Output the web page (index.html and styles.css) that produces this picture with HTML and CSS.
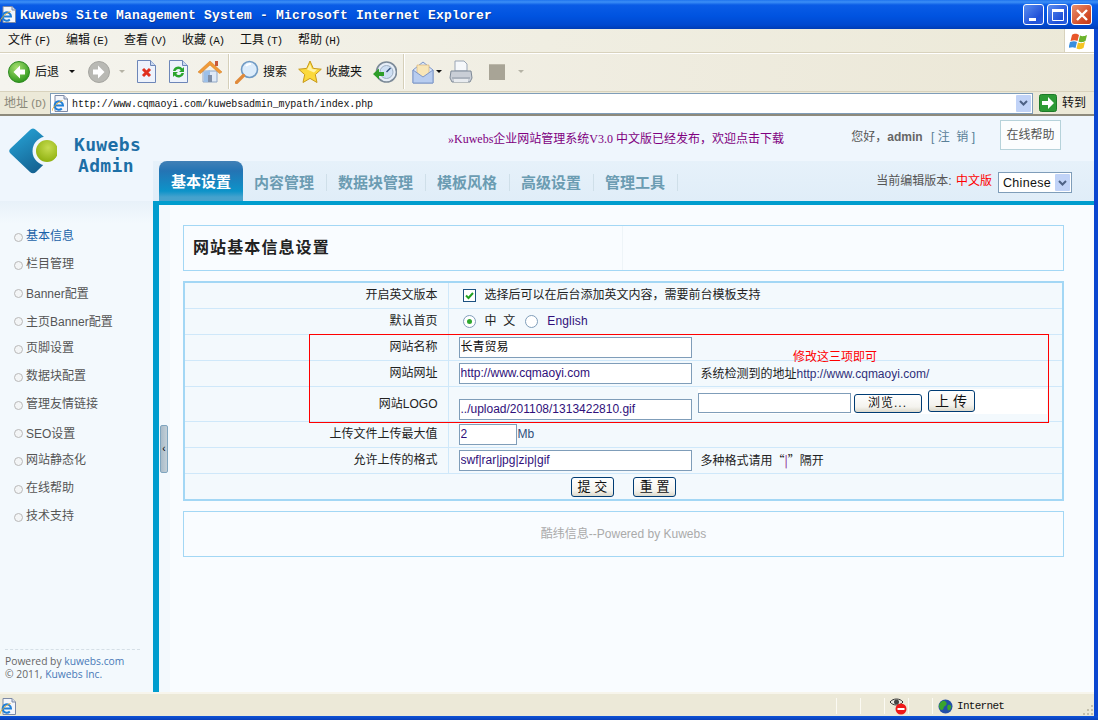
FILE: index.html
```html
<!DOCTYPE html>
<html lang="zh-CN">
<head>
<meta charset="UTF-8">
<title>Kuwebs Site Management System - Microsoft Internet Explorer</title>
<link rel="stylesheet" href="styles.css">
</head>
<body>

<svg width="0" height="0" class="defs">
  <symbol id="ie-doc" viewBox="0 0 17 17">
    <path d="M3 .5h9l3.500 3.500v12.500H3z" fill="#f4f6fb" stroke="#7d8aa6"/>
    <path d="M12 .5V4h3.500" fill="#d5dcec" stroke="#7d8aa6"/>
    <path d="M3.500 10.500h7.500a4.200 4.200 0 1 0-1.200 3" fill="none" stroke="#1f7fd8" stroke-width="2"/>
    <path d="M.5 15.500c-1-2 5-8.500 10-10" fill="none" stroke="#e8a820" stroke-width=".9"/>
  </symbol>
</svg>

<div class="window">

  <div class="titlebar">
    <svg class="title-icon" width="17" height="17"><use href="#ie-doc"/></svg>
    <span class="title-text">Kuwebs Site Management System - Microsoft Internet Explorer</span>
    <div class="title-btns">
      <span class="tbtn"><svg width="20" height="20"><rect x="5" y="13" width="7" height="3" fill="#fff"/></svg></span>
      <span class="tbtn"><svg width="20" height="20"><path d="M4.500 5.500h11v10h-11z" fill="none" stroke="#fff"/><rect x="4" y="4" width="12" height="3" fill="#fff"/></svg></span>
      <span class="tbtn tbtn-close"><svg width="20" height="20"><path d="M5 5l10 10M15 5L5 15" stroke="#fff" stroke-width="2.400"/></svg></span>
    </div>
  </div>

  <div class="menubar">
    <span class="menu-item">文件<i>(F)</i></span>
    <span class="menu-item">编辑<i>(E)</i></span>
    <span class="menu-item">查看<i>(V)</i></span>
    <span class="menu-item">收藏<i>(A)</i></span>
    <span class="menu-item">工具<i>(T)</i></span>
    <span class="menu-item">帮助<i>(H)</i></span>
    <span class="winlogo">
      <svg width="22" height="20" viewBox="0 0 22 20">
        <path d="M3 4c3-2 5-1 7 0l-1.500 6c-2-1-4-1-7 0z" fill="#e8562a"/>
        <path d="M11 4.500c2 1 4 1 7-.5l-1.500 6c-3 1.500-5 1.500-7 .5z" fill="#6cb32c"/>
        <path d="M1 11c3-1 5-1 7 0l-1.500 6c-2-1-4-1-7 0z" fill="#3a8ede"/>
        <path d="M9 11.500c2 1 4 1 7-.5l-1.500 6c-3 1.500-5 1.500-7 .5z" fill="#f5c422"/>
      </svg>
    </span>
  </div>

  <div class="toolbar">
    <svg class="t-back" width="22" height="22" viewBox="0 0 22 22">
      <defs><radialGradient id="gb" cx=".4" cy=".3" r=".8"><stop offset="0" stop-color="#a8e070"/><stop offset="1" stop-color="#1e8e12"/></radialGradient></defs>
      <circle cx="11" cy="11" r="10.500" fill="url(#gb)" stroke="#2f8a22"/>
      <path d="M12 4.500L5.500 11l6.500 6.500V13.500h5v-5h-5z" fill="#fff"/>
    </svg>
    <span class="t-label t-back-label">后退</span>
    <span class="arrow t-back-arrow"></span>
    <svg class="t-fwd" width="22" height="22" viewBox="0 0 22 22">
      <circle cx="11" cy="11" r="10.500" fill="#b9b9b4" stroke="#a5a5a0"/>
      <path d="M10 4.500l6.500 6.500-6.500 6.500V13.500H5v-5h5z" fill="#fff"/>
    </svg>
    <span class="arrow arrow-off t-fwd-arrow"></span>
    <svg class="t-stop" width="19" height="23" viewBox="0 0 19 23">
      <path d="M.5 .5h13l5 5v17H.5z" fill="#eef3fc" stroke="#6d86b8"/>
      <path d="M13.500 .5v5h5" fill="#c9d8f0" stroke="#6d86b8"/>
      <path d="M6 9l7 7M13 9l-7 7" stroke="#e0301e" stroke-width="3"/>
    </svg>
    <svg class="t-refresh" width="19" height="23" viewBox="0 0 19 23">
      <path d="M.5 .5h13l5 5v17H.5z" fill="#eef3fc" stroke="#6d86b8"/>
      <path d="M13.500 .5v5h5" fill="#c9d8f0" stroke="#6d86b8"/>
      <path d="M4 11a5.500 5.500 0 0 1 9.500-2.500L15 7v5h-5l1.800-1.800A3 3 0 0 0 6.500 11z" fill="#2aa52e"/>
      <path d="M15 13a5.500 5.500 0 0 1-9.500 2.500L4 17v-5h5l-1.800 1.800A3 3 0 0 0 12.500 13z" fill="#2aa52e"/>
    </svg>
    <svg class="t-home" width="24" height="24" viewBox="0 0 24 24">
      <path d="M5 11h14v11H5z" fill="#dfe9f6" stroke="#8fa6c6"/>
      <path d="M6 12v10h6V10z" fill="#9cc0e8"/>
      <path d="M10 15h4v7h-4z" fill="#7f8fa8"/>
      <path d="M0 12L12 1l12 11-2.500 1.500L12 5 2.500 13.500z" fill="#f09a38" stroke="#d07a20" stroke-width=".5"/>
      <rect x="17" y="1" width="3" height="5" fill="#c8583a"/>
    </svg>
    <span class="t-sep t-sep1"></span>
    <svg class="t-search" width="24" height="24" viewBox="0 0 24 24">
      <circle cx="14.500" cy="9.500" r="8" fill="#dcecfb" stroke="#6f9ac4" stroke-width="1.600"/>
      <path d="M11 6a5 5 0 0 1 5-2" stroke="#fff" stroke-width="2" fill="none"/>
      <path d="M8.500 15.500L1.500 22.500" stroke="#e08a3a" stroke-width="3.200" stroke-linecap="round"/>
    </svg>
    <span class="t-label t-search-label">搜索</span>
    <svg class="t-star" width="24" height="24" viewBox="0 0 24 24">
      <path d="M12 1l3.300 7.400 8 .8-6 5.400 1.700 7.900-7-4.100-7 4.100 1.700-7.900-6-5.400 8-.8z" fill="#fbd93c" stroke="#c89a1a"/>
      <path d="M12 4l2 5 5 .6-3 3-7-3z" fill="#fff3a8"/>
    </svg>
    <span class="t-label t-star-label">收藏夹</span>
    <svg class="t-hist" width="24" height="24" viewBox="0 0 24 24">
      <circle cx="13.500" cy="12" r="10" fill="#e6eef8" stroke="#7c8a98" stroke-width="1.600"/>
      <circle cx="13.500" cy="12" r="6.500" fill="#cfe0f4" stroke="#9fb0c4"/>
      <path d="M13.500 12l4-4" stroke="#33507a" stroke-width="1.500"/>
      <path d="M0 14l6-5.500v3.500h5v4H6v3.500z" fill="#2f9e2a"/>
    </svg>
    <span class="t-sep t-sep2"></span>
    <svg class="t-mail" width="22" height="24" viewBox="0 0 22 24">
      <path d="M1 10L11 2l10 8v13H1z" fill="#d8e4f8" stroke="#7f98c8"/>
      <path d="M5 5h12v11l-6 3-6-3z" fill="#f8e6b8" stroke="#d6b070" stroke-width=".6"/>
      <path d="M1 10l10 7 10-7v13H1z" fill="#b8cdf0" stroke="#7f98c8"/>
    </svg>
    <span class="arrow t-mail-arrow"></span>
    <svg class="t-print" width="24" height="24" viewBox="0 0 24 24">
      <path d="M6 1h9l3 3v7H6z" fill="#f6f8fb" stroke="#9aa5b5"/>
      <path d="M2 11h20l1 7-2 4H3l-2-4z" fill="#c9ced6" stroke="#7f8a98"/>
      <path d="M3 18h18" stroke="#8d97a4"/>
      <rect x="5" y="19" width="14" height="3" fill="#e8ebef"/>
    </svg>
    <span class="t-square"></span>
    <span class="arrow arrow-off t-square-arrow"></span>
  </div>

  <div class="addressbar">
    <span class="addr-label">地址<i>(D)</i></span>
    <div class="addr-box">
      <svg class="addr-icon" width="17" height="17"><use href="#ie-doc"/></svg>
      <span class="addr-url">http://www.cqmaoyi.com/kuwebsadmin_mypath/index.php</span>
      <span class="combo-btn"><svg width="9" height="6" viewBox="0 0 9 6"><path d="M1 1l3.500 3.500L8 1" fill="none" stroke="#4d6185" stroke-width="2"/></svg></span>
    </div>
    <svg class="go-icon" width="18" height="18" viewBox="0 0 18 18">
      <rect x=".5" y=".5" width="17" height="17" rx="2" fill="#2d9a35" stroke="#1d7a28"/>
      <path d="M9 3l6 6-6 6v-4H3V7h6z" fill="#fff"/>
    </svg>
    <span class="go-label">转到</span>
  </div>

  <div class="page">
    <div class="head">
      <div class="brand">
        <svg class="logo" width="48" height="48" viewBox="0 0 48 48">
          <defs>
            <linearGradient id="lg" x1="0" y1="0" x2=".6" y2="1"><stop offset="0" stop-color="#28a8dc"/><stop offset="1" stop-color="#14608f"/></linearGradient>
            <radialGradient id="ball" cx=".55" cy=".35" r=".7"><stop offset="0" stop-color="#c6dc50"/><stop offset="1" stop-color="#8cae0c"/></radialGradient>
          </defs>
          <path d="M24 1.500a4 4 0 0 0-3 1.500L1.500 21.500a3.500 3.500 0 0 0 0 5L21 45a4 4 0 0 0 6 0l19-18.500-21-3 21-4L27 3a4 4 0 0 0-3-1.500z" fill="url(#lg)"/>
          <circle cx="38" cy="24" r="14.500" fill="#f0f6fd"/>
          <circle cx="38" cy="24" r="11" fill="url(#ball)"/>
        </svg>
        <div class="brand-text">
          <span class="brand-top">Kuwebs</span>
          <span class="brand-bot">Admin</span>
        </div>
      </div>
      <div class="head-right">
        <div class="top-row">
          <a class="notice">»Kuwebs企业网站管理系统V3.0 中文版已经发布，欢迎点击下载</a>
          <span class="user">您好，<b>admin</b> <span class="logout">[ 注&nbsp;&nbsp;销 ]</span></span>
          <span class="help-box">在线帮助</span>
        </div>
        <div class="tabs-row">
          <a class="tab tab-on">基本设置</a>
          <a class="tab">内容管理</a>
          <a class="tab tab-wide">数据块管理</a>
          <a class="tab">模板风格</a>
          <a class="tab">高级设置</a>
          <a class="tab">管理工具</a>
          <span class="version">当前编辑版本: <em>中文版</em></span>
          <span class="lang-select">Chinese<span class="combo-btn"><svg width="9" height="6" viewBox="0 0 9 6"><path d="M1 1l3.500 3.500L8 1" fill="none" stroke="#4d6185" stroke-width="2"/></svg></span></span>
        </div>
      </div>
    </div>

    <div class="body-row">
      <div class="sidebar">
        <ul class="side-menu">
          <li class="on">基本信息</li>
          <li>栏目管理</li>
          <li class="low">Banner配置</li>
          <li class="low">主页Banner配置</li>
          <li>页脚设置</li>
          <li>数据块配置</li>
          <li>管理友情链接</li>
          <li class="low">SEO设置</li>
          <li>网站静态化</li>
          <li>在线帮助</li>
          <li>技术支持</li>
        </ul>
        <div class="side-foot">
          Powered by <a>kuwebs.com</a><br>
          © 2011, <a>Kuwebs Inc.</a>
        </div>
      </div>

      <div class="main">
        <span class="collapse-handle">‹</span>

        <div class="panel panel-title"><h1>网站基本信息设置</h1></div>

        <div class="form-wrap">
          <table class="form-table">
            <tr class="row-first">
              <td class="lbl">开启英文版本</td>
              <td class="val"><div class="field field-opt">
                <svg class="check" width="13" height="13" viewBox="0 0 13 13"><rect x=".5" y=".5" width="12" height="12" fill="#fff" stroke="#1c5180"/><path d="M3 6.500l2.500 2.500L10 4" fill="none" stroke="#21a121" stroke-width="2"/></svg>
                <span class="opt-text">选择后可以在后台添加英文内容，需要前台模板支持</span>
              </div></td>
            </tr>
            <tr>
              <td class="lbl">默认首页</td>
              <td class="val"><div class="field field-opt">
                <svg class="radio" width="13" height="13" viewBox="0 0 13 13"><circle cx="6.500" cy="6.500" r="6" fill="#fff" stroke="#7f9db9"/><circle cx="6.500" cy="6.500" r="2.500" fill="#2fa82f"/></svg>
                <span class="opt-zh">中&nbsp;&nbsp;文</span>
                <svg class="radio radio2" width="13" height="13" viewBox="0 0 13 13"><circle cx="6.500" cy="6.500" r="6" fill="#fff" stroke="#7f9db9"/></svg>
                <span class="opt-en">English</span>
              </div></td>
            </tr>
            <tr>
              <td class="lbl">网站名称</td>
              <td class="val"><div class="field"><input class="inp inp-cjk" type="text" value="长青贸易"></div></td>
            </tr>
            <tr>
              <td class="lbl">网站网址</td>
              <td class="val"><div class="field">
                <input class="inp" type="text" value="http://www.cqmaoyi.com">
                <span class="hint">系统检测到的地址</span><span class="detected">http://www.cqmaoyi.com/</span>
              </div></td>
            </tr>
            <tr class="row-logo">
              <td class="lbl">网站LOGO</td>
              <td class="val"><div class="field field-logo">
                <input class="inp" type="text" value="../upload/201108/1313422810.gif">
                <div class="upload-strip">
                  <input class="inp inp-file" type="text">
                  <button class="btn btn-browse">浏览...</button>
                  <button class="btn btn-upload">上 传</button>
                </div>
              </div></td>
            </tr>
            <tr>
              <td class="lbl">上传文件上传最大值</td>
              <td class="val"><div class="field"><input class="inp inp-small" type="text" value="2"><span class="unit">Mb</span></div></td>
            </tr>
            <tr>
              <td class="lbl">允许上传的格式</td>
              <td class="val"><div class="field">
                <input class="inp" type="text" value="swf|rar|jpg|zip|gif">
                <span class="hint">多种格式请用“<b class="pipe">|</b>”隔开</span>
              </div></td>
            </tr>
            <tr>
              <td colspan="2" class="actions">
                <button class="btn btn-form">提 交</button>
                <button class="btn btn-form">重 置</button>
              </td>
            </tr>
          </table>
          <div class="red-box"><span class="red-note">修改这三项即可</span></div>
        </div>

        <div class="panel panel-foot">酷纬信息--Powered by Kuwebs</div>
      </div>
    </div>
  </div>

  <div class="statusbar">
    <svg class="status-ie" width="17" height="17"><use href="#ie-doc"/></svg>
    <span class="st-cell st-a"></span>
    <span class="st-cell st-b"></span>
    <span class="st-cell st-c">
      <svg width="18" height="19" viewBox="0 0 18 19">
        <path d="M1 5c3-4 10-4 13 0-3 4-10 4-13 0z" fill="#e8e8e0" stroke="#333"/>
        <circle cx="7.500" cy="5" r="2.500" fill="#444"/>
        <circle cx="12" cy="12" r="5.500" fill="#f01818"/>
        <rect x="8.500" y="11" width="7" height="2" fill="#fff"/>
      </svg>
    </span>
    <span class="st-cell st-d"></span>
    <span class="st-cell st-e">
      <svg width="15" height="15" viewBox="0 0 15 15">
        <circle cx="7.500" cy="7.500" r="7" fill="#234fa8"/>
        <path d="M3 3c2-2 4-1 5 0s1 3-1 4-1 4-3 4-3-2-3-4 1-3 2-4zM10 6c2-1 4 1 3 3s-2 3-3 2-1-4 0-5z" fill="#3aa52e"/>
      </svg>
      <span class="st-text">Internet</span>
    </span>
    <svg class="grip" width="12" height="12" viewBox="0 0 12 12"><path d="M9 1h2v2H9zM5 5h2v2H5zM9 5h2v2H9zM1 9h2v2H1zM5 9h2v2H5zM9 9h2v2H9z" fill="#c4c0ac"/></svg>
  </div>

  <div class="bottom-edge"></div>
</div>

</body>
</html>
```

FILE: styles.css
```css
* {
  box-sizing: border-box;
}
html, body {
  margin: 0;
  height: 720px;
  overflow: hidden;
}
body {
  font-family: "Liberation Sans", "Noto Sans CJK SC", sans-serif;
  font-size: 12px;
  line-height: 16px;
  color: #333;
  background: #0a46d0;
}
.defs {
  display: block;
  height: 0;
}
.window {
  width: 1098px;
  height: 720px;
  display: flex;
  flex-direction: column;
  border-right: 4px solid #0a46d0;
}
svg {
  flex: none;
  display: block;
}

/* title bar */
.titlebar {
  height: 29px;
  margin-right: -4px;
  display: flex;
  align-items: center;
  color: #fff;
  background: linear-gradient(180deg, #1f74ee 0, #3c8ff6 2px, #0a5ce6 5px, #0053e0 16px, #0048cf 25px, #003cb4 29px);
}
.title-text {
  margin-left: 3px;
  padding-top: 2px;
  font-family: "Liberation Mono", monospace;
  font-weight: bold;
  font-size: 13px;
  letter-spacing: .2px;
  white-space: nowrap;
  text-shadow: 1px 1px 0 #0a3a9a;
}
.title-btns {
  margin-left: auto;
  margin-right: 6px;
  display: flex;
  gap: 3px;
}
.tbtn {
  width: 21px;
  height: 21px;
  border: 1px solid #fff;
  border-radius: 3px;
  background: linear-gradient(135deg, #5b8ef0, #1f50d8 70%, #2a60e0);
}
.tbtn-close {
  background: linear-gradient(135deg, #e8906e, #d24a26 70%, #c23a1a);
}

/* menu */
.menubar {
  height: 24px;
  display: flex;
  align-items: center;
  padding-left: 8px;
  gap: 18px;
  color: #111;
  background: linear-gradient(90deg, #f4f3ec, #ece9d8);
  border-bottom: 1px solid #d8d2bd;
}
.menu-item {
  width: 40px;
  white-space: nowrap;
}
.menu-item i, .addr-label i {
  font-style: normal;
  font-family: "Liberation Mono", monospace;
  font-size: 11px;
  letter-spacing: -1.400px;
  margin-left: 2px;
}
.winlogo {
  margin-left: auto;
  width: 30px;
  height: 23px;
  background: #fff;
  border-left: 1px solid #d8d2bd;
  display: flex;
  align-items: center;
  justify-content: center;
}

/* toolbar */
.toolbar {
  height: 39px;
  padding-bottom: 2px;
  display: flex;
  align-items: center;
  color: #111;
  border-top: 1px solid #fff;
  border-bottom: 1px solid #d8d2bd;
  background: linear-gradient(90deg, #f5f4ee, #ebe7d6);
}
.t-label {
  white-space: nowrap;
}
.arrow {
  flex: none;
  width: 0;
  height: 0;
  border-left: 3px solid transparent;
  border-right: 3px solid transparent;
  border-top: 3px solid #111;
}
.arrow-off {
  border-top-color: #b5b3a6;
}
.t-back { margin-left: 8px; }
.t-back-label { margin-left: 5px; }
.t-back-arrow { margin-left: 10px; }
.t-fwd { margin-left: 13px; }
.t-fwd-arrow { margin-left: 9px; }
.t-stop { margin-left: 12px; }
.t-refresh { margin-left: 13px; }
.t-home { margin-left: 10px; }
.t-sep {
  flex: none;
  width: 2px;
  height: 35px;
  background: #d5cfb9;
  border-right: 1px solid #fff;
}
.t-sep1 { margin-left: 6px; }
.t-search { margin-left: 5px; }
.t-search-label { margin-left: 4px; }
.t-star { margin-left: 11px; }
.t-star-label { margin-left: 4px; }
.t-hist { margin-left: 11px; }
.t-sep2 { margin-left: 6px; }
.t-mail { margin-left: 7px; }
.t-mail-arrow { margin-left: 2px; }
.t-print { margin-left: 7px; }
.t-square {
  flex: none;
  margin-left: 16px;
  width: 16px;
  height: 16px;
  background: #a8a496;
  border-top: 1px solid #bcb8aa;
}
.t-square-arrow { margin-left: 13px; }

/* address */
.addressbar {
  height: 24px;
  display: flex;
  align-items: center;
  background: #ece9d8;
  border-bottom: 2px solid #8d8a7c;
}
.addr-label {
  margin-left: 4px;
  width: 46px;
  color: #8a8878;
}
.addr-box {
  width: 983px;
  height: 21px;
  display: flex;
  align-items: center;
  background: #fff;
  border: 1px solid #7f9db9;
}
.addr-icon {
  margin-left: 1px;
}
.addr-url {
  margin-left: 3px;
  padding-top: 3px;
  font-family: "Liberation Mono", monospace;
  font-size: 10px;
  letter-spacing: -.1px;
  color: #111;
}
.combo-btn {
  margin-left: auto;
  margin-right: 1px;
  flex: none;
  width: 15px;
  height: 17px;
  display: flex;
  align-items: center;
  justify-content: center;
  background: #c1d3f7;
  border-radius: 1px;
}
.go-icon {
  margin-left: 6px;
}
.go-label {
  margin-left: 5px;
  color: #111;
}

/* page header */
.page {
  flex: 1;
  min-height: 0;
  display: flex;
  flex-direction: column;
  background: #f3f9fd;
}
.head {
  height: 85px;
  display: flex;
  background: #eff6fd;
}
.brand {
  flex: none;
  width: 153px;
  padding: 11px 0 0 9px;
  display: flex;
  align-items: flex-start;
}
.brand-text {
  margin-left: 17px;
  margin-top: 7px;
  display: flex;
  flex-direction: column;
  font-family: "DejaVu Sans Mono", monospace;
  font-weight: bold;
  font-size: 18px;
  line-height: 21px;
  letter-spacing: .35px;
  color: #1d6fa6;
}
.brand-bot {
  margin-left: 4px;
}
.head-right {
  flex: 1;
  min-width: 0;
  display: flex;
  flex-direction: column;
}
.top-row {
  height: 45px;
  display: flex;
  align-items: center;
}
.notice {
  margin-left: 295px;
  color: #800080;
  white-space: nowrap;
  font-family: "Liberation Serif", "Noto Sans CJK SC", serif;
}
.user {
  margin-left: auto;
  margin-top: -3px;
  color: #555;
  white-space: nowrap;
}
.user b {
  color: #666;
}
.logout {
  color: #5a8098;
  margin-left: 5px;
}
.help-box {
  margin: -7px 33px 0 25px;
  width: 61px;
  height: 30px;
  display: flex;
  align-items: center;
  justify-content: center;
  color: #555;
  background: #fbfdfe;
  border: 1px solid #b6d2da;
}
.tabs-row {
  height: 40px;
  display: flex;
  align-items: flex-start;
  background: linear-gradient(180deg, #e6f1fa, #e0edf8);
}
.tab {
  width: 84px;
  height: 17px;
  margin-top: 13px;
  padding-left: 11px;
  font-size: 15px;
  line-height: 17px;
  font-weight: bold;
  white-space: nowrap;
  color: #6b9cb2;
  border-right: 1px solid #cfdfe9;
}
.tab-wide {
  width: 99px;
}
.tab-on {
  position: relative;
  margin-left: 6px;
  margin-top: 0;
  width: 84px;
  height: 43px;
  padding: 12px 0 0 12px;
  border: 0;
  border-radius: 8px 8px 0 0;
  color: #fff;
  background: linear-gradient(180deg, #4180b6 0, #2474b4 10px, #0d93c9 30px, #45a2cd 36px, #4aa2cc 43px);
}
.version {
  margin-left: auto;
  margin-top: 12px;
  color: #555;
  white-space: nowrap;
}
.version em {
  font-style: normal;
  color: #f00;
  margin-left: 1px;
}
.lang-select {
  margin: 11px 22px 0 6px;
  width: 74px;
  height: 21px;
  padding-left: 4px;
  display: flex;
  align-items: center;
  font-size: 12.500px;
  letter-spacing: .3px;
  color: #111;
  background: #fff;
  border: 1px solid #7f9db9;
}

/* sidebar + main */
.body-row {
  flex: 1;
  min-height: 0;
  display: flex;
}
.sidebar {
  flex: none;
  width: 153px;
  display: flex;
  flex-direction: column;
  justify-content: space-between;
  background: linear-gradient(180deg, #e8f1f9 0, #f3f9fd 22px);
  padding-bottom: 11px;
}
.side-menu {
  list-style: none;
  margin: 0;
  padding: 21px 0 0 14px;
}
.side-menu li {
  height: 28px;
  line-height: 28px;
  padding-left: 12px;
  color: #555;
  white-space: nowrap;
  position: relative;
}
.side-menu .low {
  line-height: 32px;
}
.side-menu li::before {
  content: "";
  position: absolute;
  left: 0;
  top: 11px;
  width: 7px;
  height: 7px;
  border: 1px solid #b9b9b9;
  border-radius: 50%;
  background: #f3f5f6;
}
.side-menu .on {
  color: #1a62a8;
}
.side-foot {
  margin: 0 13px 0 5px;
  padding-top: 5px;
  border-top: 1px dashed #d5dfe6;
  font-family: "Open Sans", sans-serif;
  font-size: 10.300px;
  line-height: 13px;
  color: #666;
}
.side-foot a {
  color: #4a7ab8;
}
.main {
  flex: 1;
  min-width: 0;
  position: relative;
  padding: 20px 30px 0 24px;
  border-left: 6px solid #009dce;
  border-top: 4px solid #009dce;
  background: linear-gradient(90deg, #f3f9fd 11px, #f9fcff 11px);
}
.collapse-handle {
  position: absolute;
  left: 1px;
  top: 220px;
  width: 8px;
  height: 48px;
  font-size: 10px;
  line-height: 46px;
  text-align: center;
  color: #000;
  background: linear-gradient(90deg, #a9bcc9, #c3cfd7);
  border: 1px solid #7fa5bf;
  border-radius: 2px;
}
.panel {
  height: 46px;
  border: 1px solid #a3d7f5;
}
.panel-title {
  display: flex;
  align-items: center;
  padding-left: 9px;
  margin-bottom: 10px;
  background: linear-gradient(90deg, #f9fcff 438px, #eef4f8 438px, #eef4f8 439px, #f9fcff 439px);
}
h1 {
  margin: 0;
  font-size: 16px;
  line-height: 20px;
  letter-spacing: 1.100px;
  color: #222;
}

/* form table */
.form-wrap {
  position: relative;
  height: 220px;
  border: 2px solid #a3d7f5;
  background: #f3f9fd;
  margin-bottom: 10px;
}
.form-table {
  width: 100%;
  border-collapse: collapse;
  table-layout: fixed;
}
.form-table td {
  height: 26px;
  padding: 0;
  border-bottom: 1px solid #cfe8fa;
}
.form-table tr:last-child td {
  border-bottom: 0;
}
.form-table .row-first td {
  height: 25px;
}
.form-table .row-logo td {
  height: 35px;
}
.lbl {
  width: 263px;
  text-align: right;
  padding-right: 10px !important;
  border-right: 1px solid #cfe8fa;
  color: #222;
}
.val {
  padding-left: 10px !important;
}
.field {
  display: flex;
  align-items: center;
}
.field-opt {
  padding-left: 4px;
}
.inp {
  width: 233px;
  height: 21px;
  padding: 0 1px;
  font: 12px "Liberation Sans", "Noto Sans CJK SC", sans-serif;
  color: #30107a;
  background: #fff;
  border: 1px solid #7f9db9;
  outline: 0;
}
.inp-cjk {
  padding-bottom: 4px;
  color: #111;
}
.inp-small {
  width: 58px;
}
.inp-file {
  width: 153px;
  height: 20px;
}
.opt-text {
  margin-left: 9px;
  color: #222;
}
.opt-zh {
  margin-left: 9px;
  color: #222;
}
.radio2 {
  margin-left: 10px;
}
.opt-en {
  margin-left: 9px;
  letter-spacing: .2px;
  color: #30107a;
}
.hint {
  margin-left: 9px;
  font-family: "Noto Sans CJK SC", sans-serif;
  color: #222;
  white-space: nowrap;
}
.pipe {
  font-weight: normal;
  color: #800080;
}
.detected {
  color: #30307a;
  white-space: nowrap;
  margin-top: 2px;
}
.unit {
  margin-left: 1px;
  color: #30507a;
}
.field-logo {
  align-items: flex-start;
}
.field-logo > .inp {
  margin-top: 11px;
}
.upload-strip {
  width: 349px;
  height: 25px;
  margin: 1px 0 0 6px;
  display: flex;
  align-items: flex-start;
  background: #fff;
}
.upload-strip .inp-file {
  margin-top: 4px;
}
.btn {
  height: 19px;
  padding: 0;
  font: 12px/16px "Liberation Sans", "Noto Sans CJK SC", sans-serif;
  color: #111;
  background: linear-gradient(180deg, #fff, #f4f3ee 70%, #dcd9cc);
  border: 1px solid #003c74;
  border-radius: 3px;
}
.btn-browse {
  width: 68px;
  margin: 5px 0 0 3px;
  letter-spacing: 1px;
}
.btn-upload {
  width: 47px;
  height: 22px;
  margin: 1px 0 0 6px;
  font-size: 14px;
}
.actions {
  text-align: center;
  padding-top: 1px !important;
}
.btn-form {
  width: 43px;
  height: 20px;
  margin: 0 8px;
  font-size: 13px;
}
.red-box {
  position: absolute;
  left: 124px;
  top: 51px;
  width: 740px;
  height: 89px;
  border: 1px solid #f00;
  pointer-events: none;
}
.red-note {
  position: absolute;
  left: 483px;
  top: 14px;
  color: #f00;
  white-space: nowrap;
}
.panel-foot {
  display: flex;
  align-items: center;
  justify-content: center;
  color: #aaa;
}

/* status bar */
.statusbar {
  height: 24px;
  padding-top: 2px;
  display: flex;
  align-items: center;
  background: #ece9d8;
  border-top: 2px solid #f7f5ec;
}
.status-ie {
  margin-right: auto;
}
.st-cell {
  flex: none;
  height: 16px;
  border-left: 1px solid #fbfaf3;
  display: flex;
  align-items: center;
}
.st-a, .st-b, .st-d {
  width: 24px;
}
.st-c {
  width: 24px;
  padding-left: 4px;
}
.st-e {
  width: 164px;
  padding-left: 5px;
}
.st-text {
  margin-left: 4px;
  font-family: "Liberation Mono", monospace;
  font-size: 11px;
  letter-spacing: -.7px;
  color: #111;
}
.grip {
  margin: 8px 0 0 -14px;
}
.bottom-edge {
  height: 4px;
  margin-right: -4px;
  background: linear-gradient(180deg, #0d53d8, #0a3fb8);
}
```
